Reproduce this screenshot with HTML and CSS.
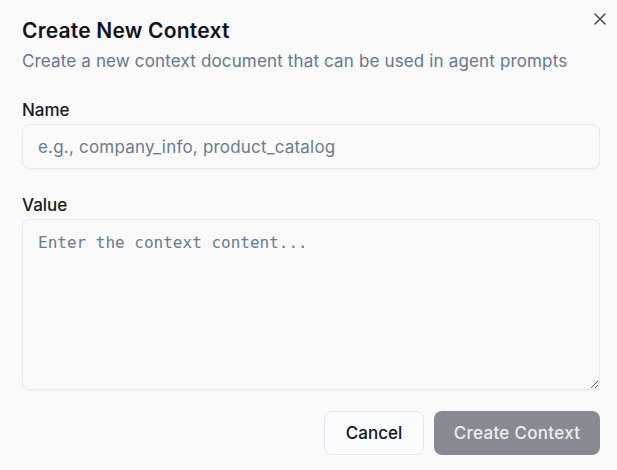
FILE: index.html
```html
<!DOCTYPE html>
<html lang="en">
<head>
    <meta charset="UTF-8">
    <title>Create New Context</title>
    <link rel="stylesheet" href="styles.css">
</head>
<body>
<div class="dialog">
    <button class="close" type="button" aria-label="Close">
        <svg width="14" height="14" viewBox="0 0 14 14" fill="none" stroke="#4b4f5a" stroke-width="1.6" stroke-linecap="round">
            <path d="M2 2L12 12M12 2L2 12"/>
        </svg>
    </button>
    <div class="header">
        <h2 class="title">Create New Context</h2>
        <p class="subtitle">Create a new context document that can be used in agent prompts</p>
    </div>
    <div class="field">
        <label class="label" for="name">Name</label>
        <input class="input" id="name" type="text" placeholder="e.g., company_info, product_catalog">
    </div>
    <div class="field">
        <label class="label" for="value">Value</label>
        <textarea class="textarea" id="value" placeholder="Enter the context content..."></textarea>
    </div>
    <div class="footer">
        <button class="btn btn-outline" type="button">Cancel</button>
        <button class="btn btn-primary" type="button" disabled>Create Context</button>
    </div>
</div>
</body>
</html>
```

FILE: styles.css
```css
* {
    margin: 0;
    padding: 0;
    box-sizing: border-box;
}

body {
    background-color: #fafafa;
    font-family: Inter, "Noto Sans", sans-serif;
    color: #0f1420;
}

.dialog {
    position: relative;
    padding: 18px 17px 14px 22px;
}

.close {
    position: absolute;
    right: 10px;
    top: 12px;
    width: 14px;
    height: 14px;
    border: none;
    background: none;
    display: flex;
}

.header {
    display: flex;
    flex-direction: column;
    gap: 6px;
}

.title {
    font-size: 21px;
    line-height: 26px;
    font-weight: 600;
    letter-spacing: 0.2px;
}

.subtitle {
    font-size: 17px;
    line-height: 22px;
    letter-spacing: 0.15px;
    color: #66768d;
}

.field {
    display: flex;
    flex-direction: column;
    gap: 4px;
    margin-top: 28px;
}

.field + .field {
    margin-top: 26px;
}

.label {
    font-size: 17px;
    line-height: 20px;
    font-weight: 500;
    color: #171b26;
}

.input,
.textarea {
    width: 100%;
    border: 1px solid #e3e8f0;
    border-radius: 8px;
    background-color: #fafafa;
    box-shadow: 0 1px 2px rgba(15, 23, 42, 0.04);
    color: #0f1420;
    outline: none;
}

.input {
    height: 45px;
    padding: 0 15px;
    font-family: Inter, "Noto Sans", sans-serif;
    font-size: 17px;
    letter-spacing: 0.2px;
}

.textarea {
    height: 171px;
    padding: 12px 15px;
    font-family: "DejaVu Sans Mono", monospace;
    font-size: 16px;
    line-height: 22px;
    resize: vertical;
}

.input::placeholder,
.textarea::placeholder {
    color: #6b7a90;
}

.footer {
    display: flex;
    justify-content: flex-end;
    gap: 10px;
    margin-top: 21px;
}

.btn {
    height: 44px;
    border-radius: 8px;
    font-family: Inter, "Noto Sans", sans-serif;
    font-size: 17px;
    font-weight: 500;
    padding: 0 14px;
}

.btn-outline {
    width: 100px;
    background-color: #fafcfe;
    border: 1px solid #e3e8f0;
    color: #0f1420;
}

.btn-primary {
    width: 166px;
    background-color: #878a92;
    border: none;
    color: #eceef0;
    letter-spacing: 0.3px;
}
```
